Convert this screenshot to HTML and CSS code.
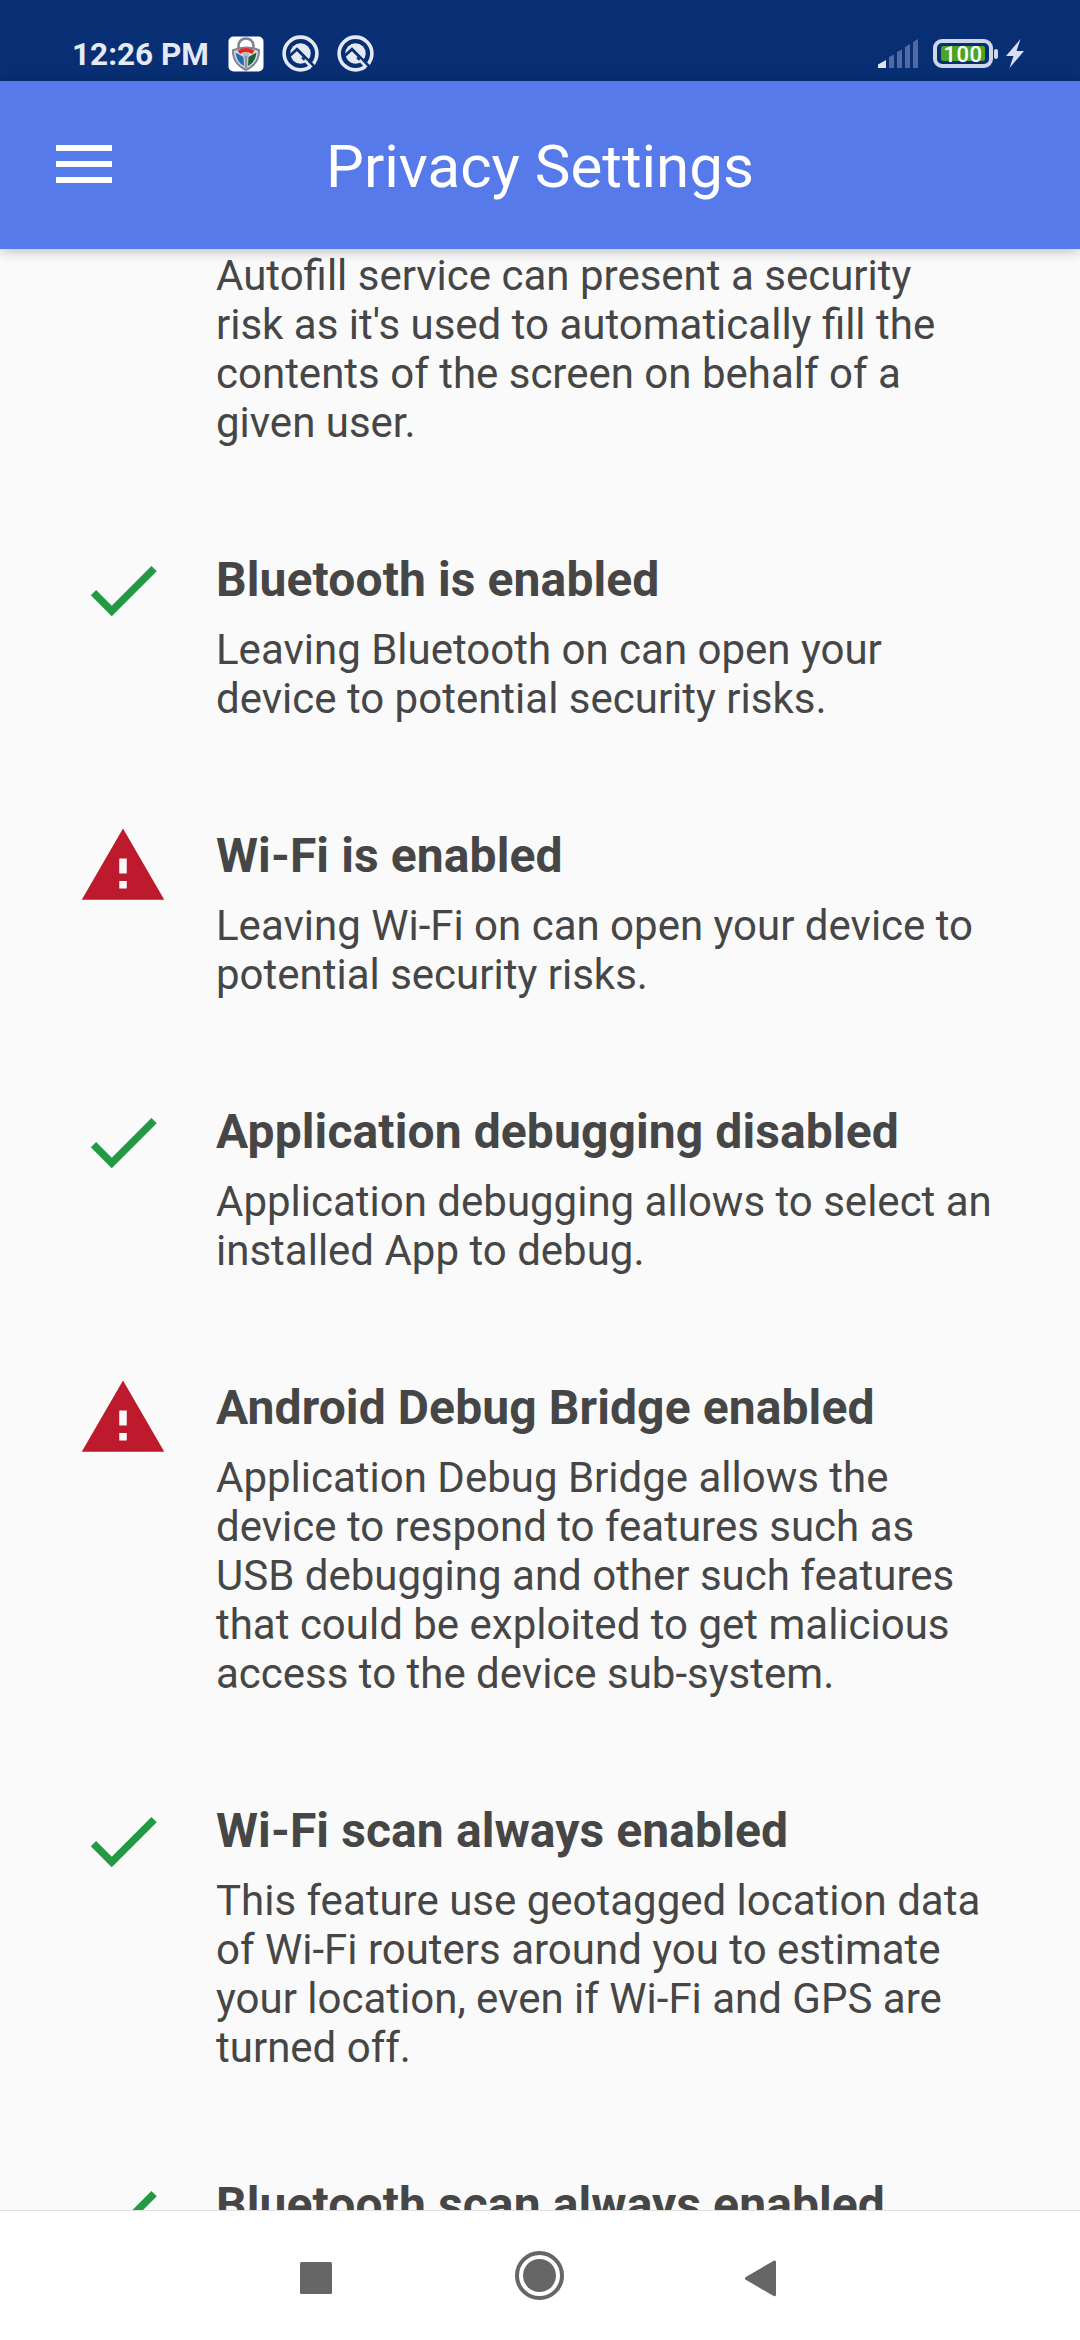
FILE: index.html
```html
<!DOCTYPE html>
<html lang="en">
<head>
<meta charset="utf-8">
<title>Privacy Settings</title>
<link rel="stylesheet" href="styles.css">
</head>
<body>
<svg class="defs" width="0" height="0">
  <symbol id="check" viewBox="0 0 24 24"><path d="M9 16.17 4.83 12l-1.42 1.41L9 19 21 7l-1.41-1.41z"/></symbol>
  <symbol id="warning" viewBox="0 0 24 24"><path d="M1 21h22L12 2 1 21zm12-3h-2v-2h2v2zm0-4h-2v-4h2v4z"/></symbol>
  <symbol id="q" viewBox="0 0 37 37">
    <circle cx="18.500" cy="18.500" r="16.400" fill="none" stroke="#e5e9f5" stroke-width="3.600"/>
    <circle cx="18.500" cy="18.500" r="10.200" fill="#e5e9f5"/>
    <path d="M7 21.500 15 14.300 32.500 31.800" fill="none" stroke="#082f74" stroke-width="2.800"/>
    <path d="M20 22.500 30.500 33" fill="none" stroke="#082f74" stroke-width="2"/>
    <path d="M22.500 25 29.500 32.300" fill="none" stroke="#e5e9f5" stroke-width="2.600"/>
  </symbol>
</svg>
<div class="screen">
  <div class="status">
    <span class="time">12:26 PM</span>
    <svg class="app" viewBox="0 0 36 36" width="36" height="36">
      <rect x=".5" y=".5" width="35" height="35" rx="5" fill="#fff"/>
      <path d="M10.500 13V9.500a7.500 7 0 0 1 15 0V13" fill="none" stroke="#7d8594" stroke-width="2.600"/>
      <path d="M18 10.500Q25 10.500 32 13.500C32.500 24 27 31 18 35 9 31 3.500 24 4 13.500Q11 10.500 18 10.500Z" fill="#7d8594"/>
      <path d="M18 12.500Q24 12.500 30 15C30 23 26 29 18 32.800 10 29 6 23 6 15Q12 12.500 18 12.500Z" fill="#d7dbe2"/>
      <path d="M9.500 14.500Q18 9.500 26.500 14.500L24 18Q18 14 12 18Z" fill="#e8251d"/>
      <path d="M7.500 16.500 15.500 21 16 30Q8.500 26 7.500 16.500Z" fill="#2469b3"/>
      <path d="M28.500 16.500 20.500 21 20 30Q27.500 26 28.500 16.500Z" fill="#17633b"/>
      <circle cx="18" cy="19" r="2.800" fill="#b3bac6"/>
      <path d="M16.700 20h2.600v12h-2.600z" fill="#8b93a3"/>
    </svg>
    <svg class="q" width="37" height="37"><use href="#q"/></svg>
    <svg class="q" width="37" height="37"><use href="#q"/></svg>
    <svg class="signal" viewBox="0 0 40 29" width="40" height="29">
      <path d="M0 25.500 8 21V29H0Z" fill="#dfe4f3"/>
      <path d="M11 18 16 15.500V29H11ZM19 13 24 10.500V29H19ZM27 8 32 5V29H27ZM35 3 40 0V29H35Z" fill="#526a9f"/>
    </svg>
    <div class="battery"><span class="charge">100</span></div>
    <i class="tip"></i>
    <svg class="bolt" viewBox="0 0 18 29" width="18" height="29"><path d="M14.500 0 0 17H7.500L3.500 29 18 12H10.500Z" fill="#d9dfef"/></svg>
  </div>
  <header class="bar">
    <div class="menu"><i></i><i></i><i></i></div>
    <h1>Privacy Settings</h1>
  </header>
  <main class="list">
    <section class="item first">
      <div class="text"><p>Autofill service can present a security<br>risk as it's used to automatically fill the<br>contents of the screen on behalf of a<br>given user.</p></div>
    </section>
    <section class="item">
      <svg class="icon ok"><use href="#check"/></svg>
      <div class="text"><h2>Bluetooth is enabled</h2><p>Leaving Bluetooth on can open your<br>device to potential security risks.</p></div>
    </section>
    <section class="item">
      <svg class="icon warn"><use href="#warning"/></svg>
      <div class="text"><h2>Wi-Fi is enabled</h2><p>Leaving Wi-Fi on can open your device to<br>potential security risks.</p></div>
    </section>
    <section class="item">
      <svg class="icon ok"><use href="#check"/></svg>
      <div class="text"><h2>Application debugging disabled</h2><p>Application debugging allows to select an<br>installed App to debug.</p></div>
    </section>
    <section class="item">
      <svg class="icon warn"><use href="#warning"/></svg>
      <div class="text"><h2>Android Debug Bridge enabled</h2><p>Application Debug Bridge allows the<br>device to respond to features such as<br>USB debugging and other such features<br>that could be exploited to get malicious<br>access to the device sub-system.</p></div>
    </section>
    <section class="item">
      <svg class="icon ok"><use href="#check"/></svg>
      <div class="text"><h2>Wi-Fi scan always enabled</h2><p>This feature use geotagged location data<br>of Wi-Fi routers around you to estimate<br>your location, even if Wi-Fi and GPS are<br>turned off.</p></div>
    </section>
    <section class="item">
      <svg class="icon ok"><use href="#check"/></svg>
      <div class="text"><h2>Bluetooth scan always enabled</h2></div>
    </section>
  </main>
  <nav class="nav">
    <svg viewBox="0 0 50 50"><rect x="9" y="10" width="32" height="32" rx="1.500"/></svg>
    <svg viewBox="0 0 50 50"><circle cx="24.500" cy="23.500" r="22.500" fill="none" stroke="#666" stroke-width="4"/><circle cx="24.500" cy="23.500" r="16.500"/></svg>
    <svg viewBox="0 0 50 50"><path d="M7.500 26.400 35.500 10V42.800Z" stroke="#666" stroke-width="3" stroke-linejoin="round"/></svg>
  </nav>
</div>
</body>
</html>
```
FILE: styles.css
```css
* { box-sizing: border-box; margin: 0; padding: 0; }
body { font-family: Roboto, sans-serif; background: #fafafa; color: #464646; }
.defs { position: absolute; }
.screen { width: 1080px; height: 2340px; display: flex; flex-direction: column; overflow: hidden; }

.status {
  height: 81px; flex: none; display: flex; align-items: center;
  padding: 26px 56px 0 72px; background: #082f74; color: #e5e9f5;
}
.time { width: 156px; padding-top: 3px; font-size: 31.5px; font-weight: 700; line-height: 38px; white-space: nowrap; }
.q { margin-left: 18px; }
.signal { margin-left: auto; }
.battery {
  width: 60px; height: 29px; margin-left: 15px; padding: 3px 4px;
  border: 4px solid #ced6ea; border-radius: 9px;
}
.charge {
  display: block; height: 15px; border-radius: 2px; background: #48a623; color: #fff;
  font-size: 22px; font-weight: 500; line-height: 17px; text-align: center; letter-spacing: .5px;
}
.tip { width: 4px; height: 10px; margin: 0 8px 0 1px; border-radius: 2px; background: #ced6ea; }

.bar {
  height: 168px; flex: none; display: grid; grid-template-columns: 56px 1fr 56px; align-items: center;
  padding: 0 56px; background: #567ae9; color: #fff; z-index: 1;
  box-shadow: 0 2px 12px rgba(0, 0, 0, .25);
}
.menu { display: grid; gap: 10px; padding: 0 0 2px; }
.menu i { height: 6px; background: #fff; }
.bar h1 { font-size: 60px; font-weight: 400; line-height: 70px; text-align: center; padding-top: 4px; }

.list { flex: 1; min-height: 0; overflow: hidden; display: flex; flex-direction: column; gap: 98px; padding: 2px 60px 0 78px; }
.item { display: flex; flex: none; gap: 48px; }
.first { padding-left: 138px; }
.icon { width: 90px; height: 90px; margin-bottom: -90px; flex: none; }
.ok { fill: #239943; }
.warn { fill: #be1a2d; }
.text { padding-top: 7px; white-space: nowrap; }
.first .text { padding-top: 0; }
.text h2 { font-size: 48px; font-weight: 700; line-height: 56px; letter-spacing: .1px; margin-bottom: 17px; }
.text p { font-size: 42px; line-height: 49px; }

.nav {
  height: 130px; flex: none; display: flex; justify-content: center; gap: 174px; padding-top: 41px;
  background: #fff; border-top: 1px solid #e0e0e0;
}
.nav svg { width: 50px; height: 50px; fill: #666; overflow: visible; }
```
